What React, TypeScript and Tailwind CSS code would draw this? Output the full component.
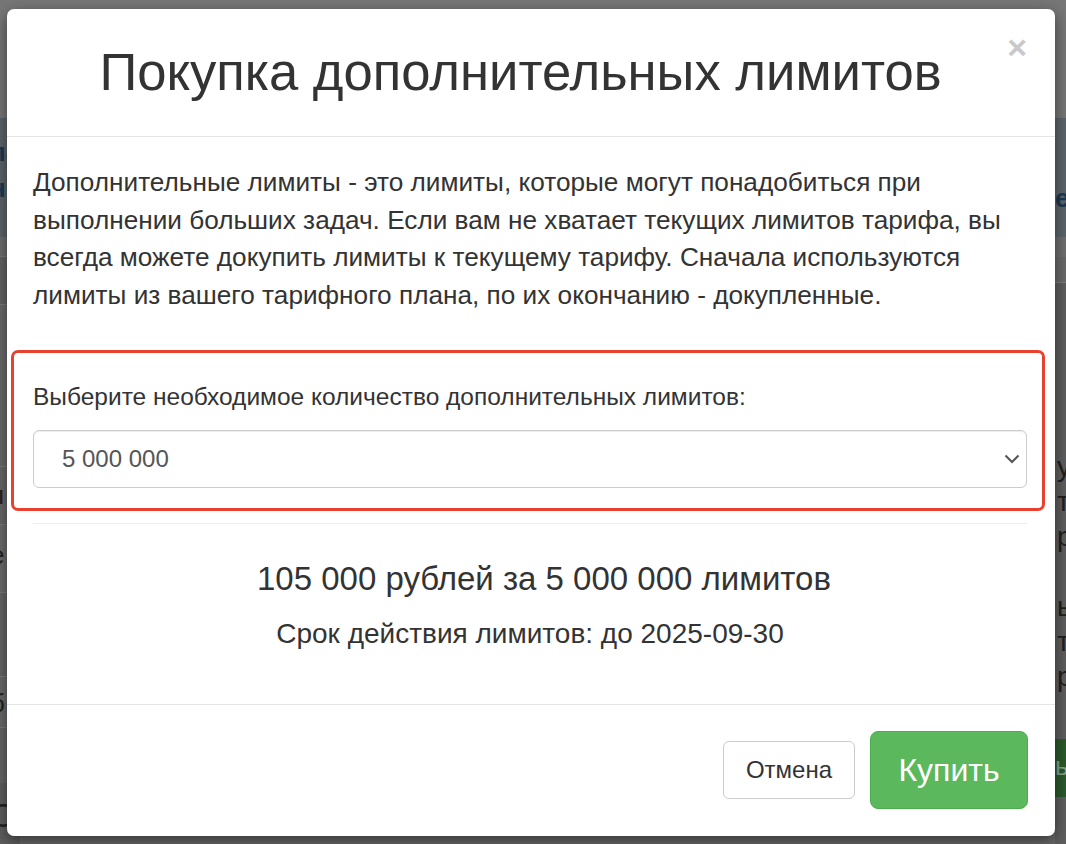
const pageRight = ["у", "т", "р", "", "ь", "т", "р"];

export default function App() {
  return (
    <div className="relative h-[844px] w-[1066px] overflow-hidden bg-[#6b6b6b] font-['Liberation_Sans',Arial,sans-serif] text-[#333]">
      {/* dimmed page behind the dialog */}
      <div className="flex h-full flex-col">
        <div className="h-[118px] shrink-0 bg-[#777777]" />
        <div className="flex h-[119px] shrink-0 justify-between bg-[#5c656c] text-[26px] font-bold text-[#1c3850]">
          <div className="-ml-[10px] flex flex-col pt-[16px] leading-[36px]">
            <span>па</span>
            <span>нн</span>
            <span>-</span>
          </div>
          <div className="w-[11px] overflow-hidden pt-[62px] leading-[36px]">е</div>
        </div>
        <div className="flex flex-1 justify-between">
          <div className="-ml-[10px] flex w-[30px] flex-col text-[26px] text-[#222]">
            <div className="h-[20px] border-b border-[#7c7c7c] bg-[#6f6f6f]" />
            <div className="h-[48px] border-b border-[#7c7c7c] bg-[#646464]" />
            <div className="h-[162px] border-b border-[#7c7c7c] bg-[#6a6a6a]" />
            <div className="h-[58px] border-b border-[#7c7c7c] bg-[#686868] pt-[10px] leading-[36px]">п</div>
            <div className="h-[68px] border-b border-[#7c7c7c] bg-[#6c6c6c] pt-[12px] leading-[36px]">е</div>
            <div className="h-[84px] border-b border-[#7c7c7c] bg-[#666666]" />
            <div className="h-[51px] border-b border-[#7c7c7c] bg-[#6a6a6a] pt-[8px] leading-[36px]">б</div>
            <div className="h-[55px] bg-[#676767]" />
            <div className="flex-1 bg-[#5f5f5f] pt-[12px] text-[34px] leading-[40px]">О</div>
          </div>
          <div className="flex w-[11px] flex-col overflow-hidden">
            <div className="h-[20px] bg-[#6f6f6f]" />
            <div className="h-[26px] border-b border-[#7c7c7c] bg-[#6a6a6a]" />
            <div className="flex h-[456px] flex-col bg-[#5e5e5e] pt-[166px] text-[28px] leading-[36px] text-[#1f1f1f]">
              {pageRight.map((letter, i) => (
                <span key={i} className="h-[35px] pl-[2px]">
                  {letter}
                </span>
              ))}
            </div>
            <div className="h-[58px] bg-[#2b5a2c] pt-[9px] text-[26px] leading-[36px] text-[#8aa48a]">ь</div>
            <div className="flex-1 bg-[#5f5f5f]" />
          </div>
        </div>
      </div>

      {/* dialog */}
      <div className="absolute left-[7px] top-[9px] w-[1048px] overflow-hidden rounded-[7px] bg-white shadow-[0_5px_15px_rgba(0,0,0,0.5)]">
        <div className="relative flex h-[128px] items-center justify-center border-b border-[#e5e5e5] pb-[2px] pr-[21px]">
          <h4 className="text-[52.6px] leading-[60px] text-[#333]">Покупка дополнительных лимитов</h4>
          <button className="absolute right-[28px] top-[21px] text-[34px] font-bold leading-[34px] text-[#c9c9c9]">
            ×
          </button>
        </div>

        <div className="pb-[52px] pl-[26px] pr-[28px] pt-[27px]">
          <p className="text-[26.2px] leading-[37.7px] text-[#333]">
            Дополнительные лимиты - это лимиты, которые могут понадобиться при выполнении больших задач. Если вам не
            хватает текущих лимитов тарифа, вы всегда можете докупить лимиты к текущему тарифу. Сначала используются
            лимиты из вашего тарифного плана, по их окончанию - докупленные.
          </p>

          <div className="-ml-[22px] -mr-[18px] mt-[35px] rounded-[7px] border-[3px] border-[#e8412f] pb-[20px] pl-[19px] pr-[15px] pt-[28px]">
            <label className="block text-[24.5px] leading-[32px] text-[#333]">
              Выберите необходимое количество дополнительных лимитов:
            </label>
            <div className="mt-[17px] flex h-[58px] items-center justify-between rounded-[6px] border border-[#cccccc] pl-[28px] pr-[6px] shadow-[inset_0_1px_1px_rgba(0,0,0,0.075)]">
              <span className="text-[24px] text-[#555]">5 000 000</span>
              <svg width="16" height="10" viewBox="0 0 16 10" className="mt-[1px]">
                <polyline points="1.5,1.5 8,8 14.5,1.5" fill="none" stroke="#555" strokeWidth="2" />
              </svg>
            </div>
          </div>

          <div className="mt-[12px] border-t border-[#eeeeee]" />

          <div className="flex flex-col items-center pt-[37px]">
            <div className="pl-[28px] text-[33px] leading-[36px] text-[#333]">105 000 рублей за 5 000 000 лимитов</div>
            <div className="mt-[19px] text-[28px] leading-[36px] text-[#333]">Срок действия лимитов: до 2025-09-30</div>
          </div>
        </div>

        <div className="flex h-[132px] items-center justify-end gap-[15px] border-t border-[#e5e5e5] pr-[27px]">
          <button className="h-[58px] w-[132px] rounded-[6px] border border-[#cccccc] bg-white text-[24px] text-[#333]">
            Отмена
          </button>
          <button className="h-[78px] w-[158px] rounded-[8px] border border-[#4cae4c] bg-[#5cb85c] text-[32px] text-white">
            Купить
          </button>
        </div>
      </div>
    </div>
  );
}
